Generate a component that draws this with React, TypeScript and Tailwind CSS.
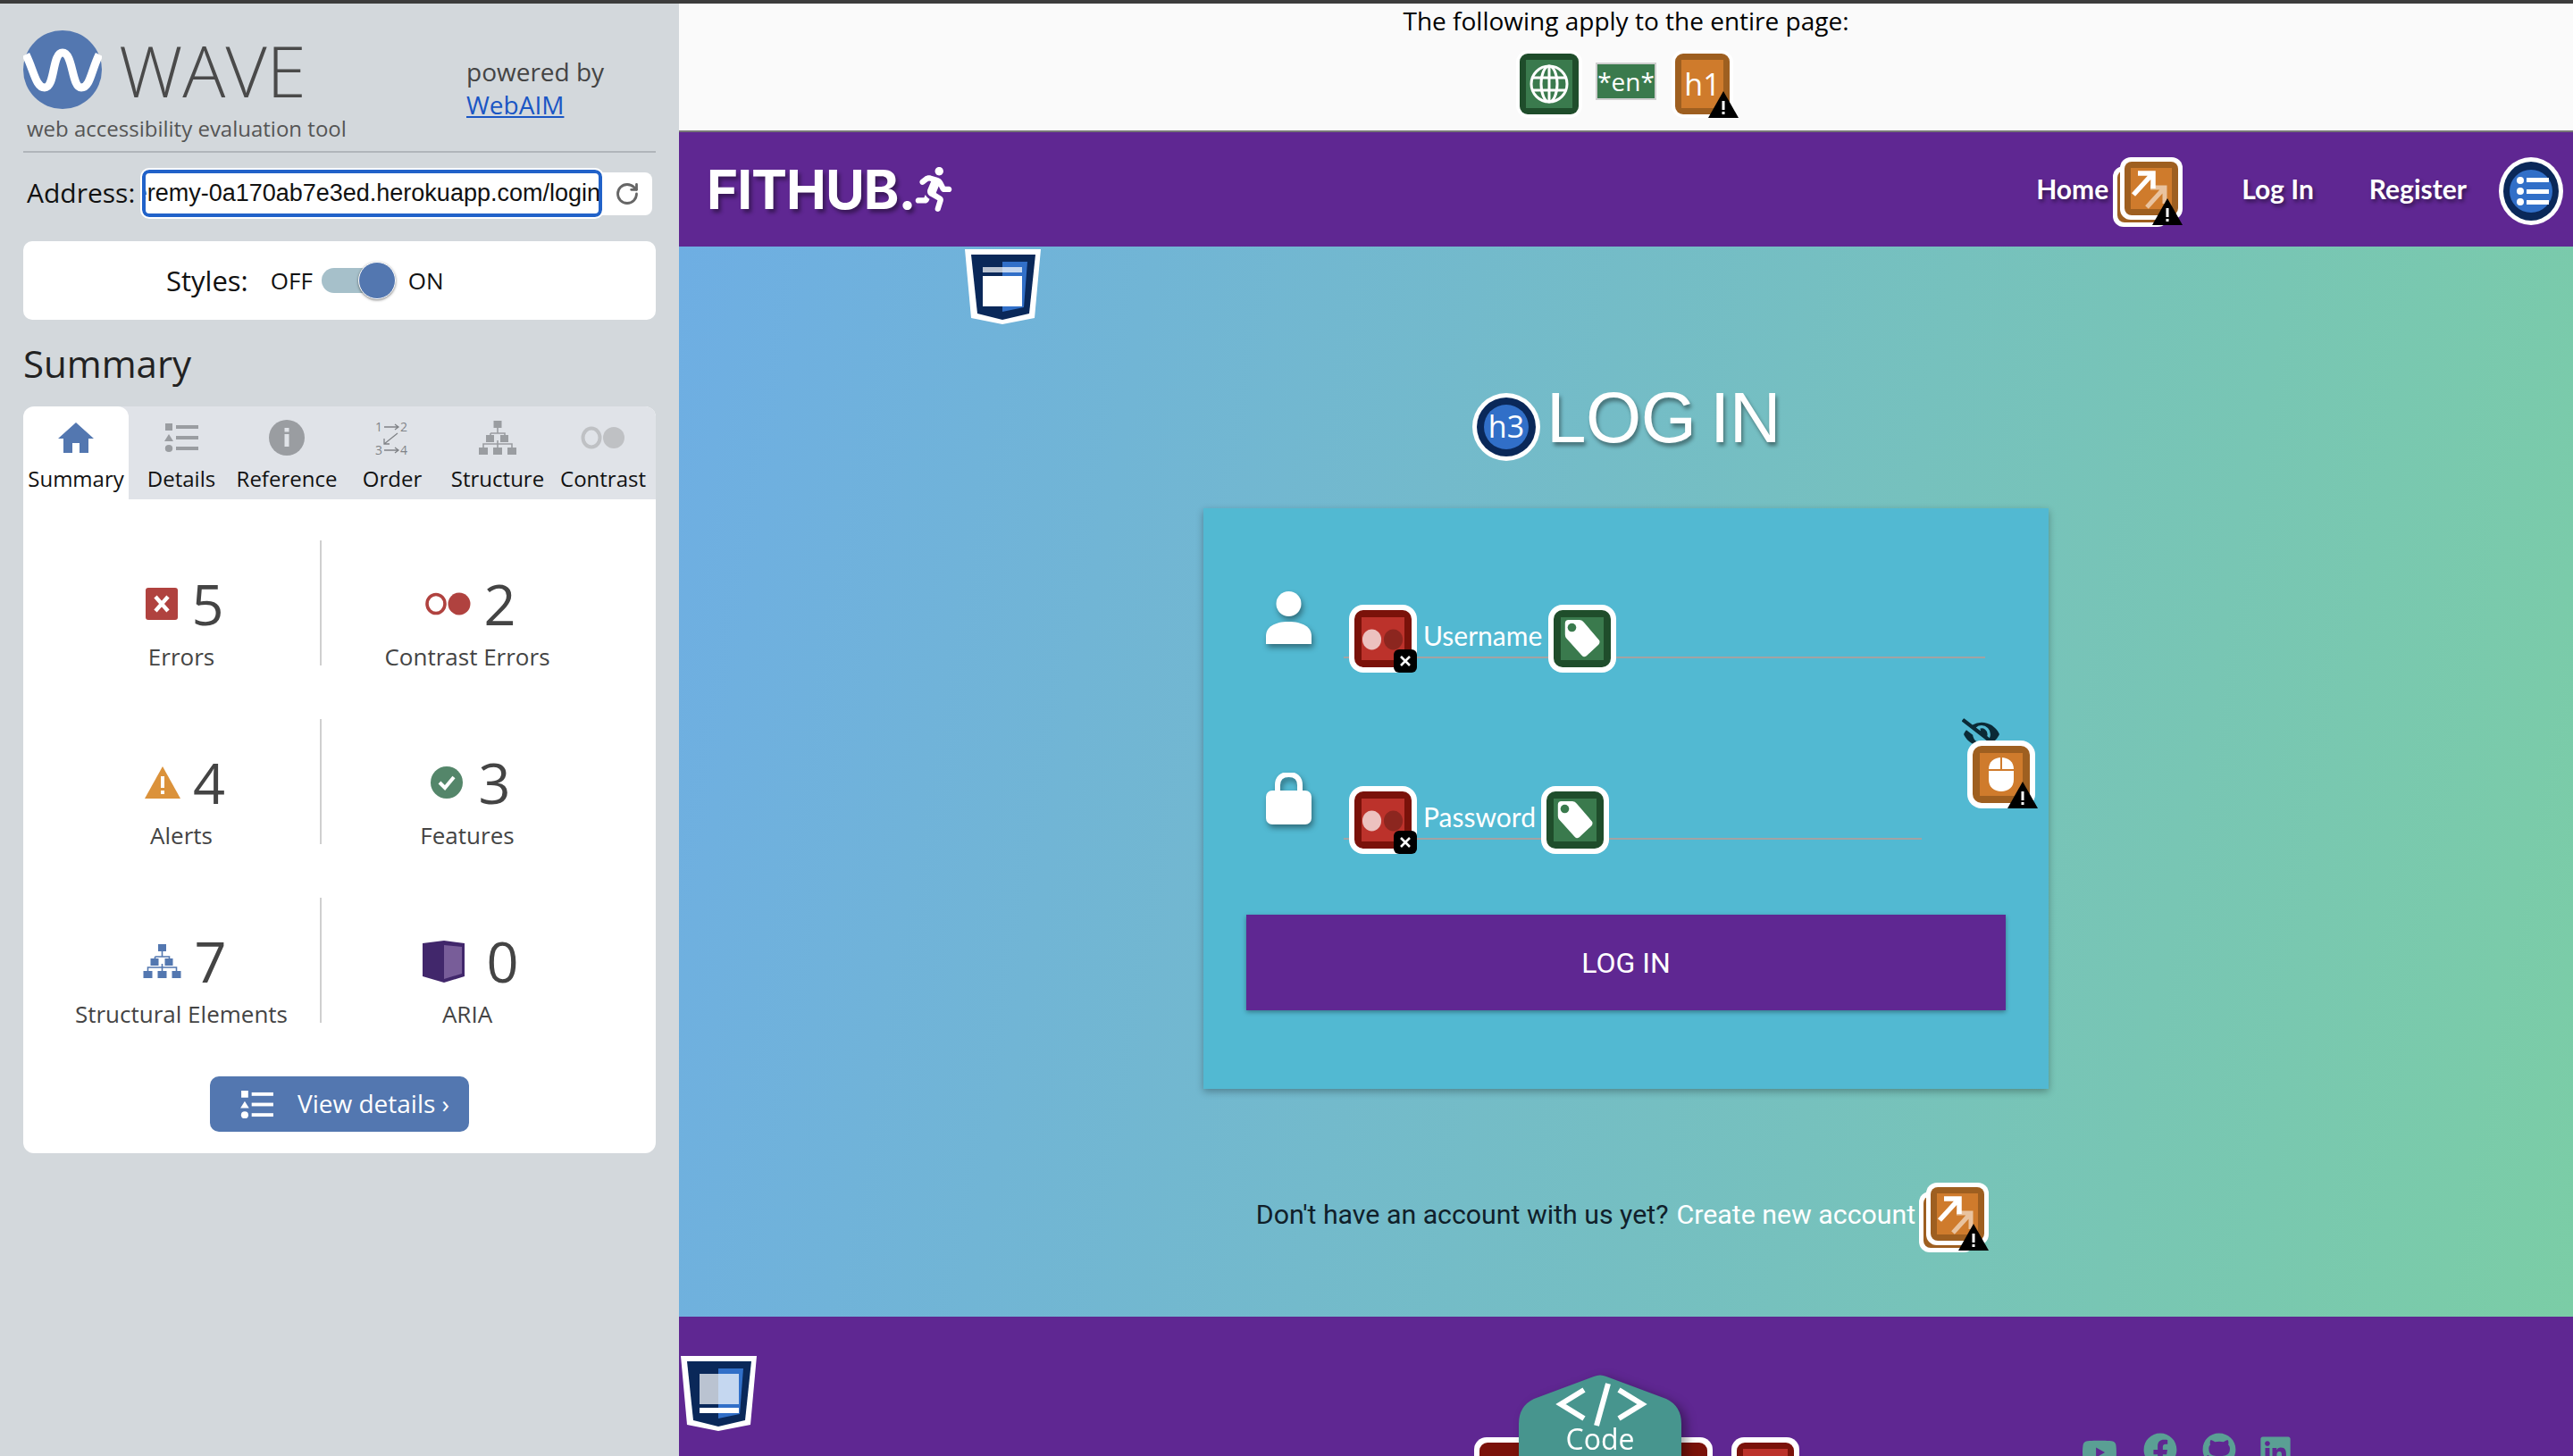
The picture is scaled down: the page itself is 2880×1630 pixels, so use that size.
import type { ReactNode } from "react"
import { RotateCw } from "lucide-react"
import { FaEyeSlash, FaFacebook, FaGithub, FaLinkedin, FaRunning, FaYoutube } from "react-icons/fa"

type Tone = "red" | "green" | "orange"

const tones = {
  red: { dark: "bg-[#7a120a]", light: "bg-[#bc322b]" },
  green: { dark: "bg-[#1f4d2b]", light: "bg-[#3a7a4d]" },
  orange: { dark: "bg-[#9e5f20]", light: "bg-[#cf7b2c]" },
}

const WarnBadge = ({ className }: { className: string }) => (
  <svg viewBox="0 0 34 30" className={`absolute w-[34px] h-[30px] ${className}`}>
    <polygon points="17,0 34,30 0,30" fill="#000" />
    <rect x="15.5" y="11" width="3" height="10" fill="#fff" />
    <rect x="15.5" y="23" width="3" height="3" fill="#fff" />
  </svg>
)

const XBadge = () => (
  <div className="absolute right-0 bottom-0 w-[26px] h-[26px] rounded-[6px] bg-black flex items-center justify-center">
    <svg viewBox="0 0 14 14" className="w-[14px] h-[14px]">
      <path d="M2 2 L12 12 M12 2 L2 12" stroke="#fff" strokeWidth="2.6" />
    </svg>
  </div>
)

const Tile = ({ tone, children, badge }: { tone: Tone; children: ReactNode; badge?: "warn" | "x" }) => (
  <div className="relative shrink-0 w-[76px] h-[76px] rounded-[16px] bg-white p-[6px]">
    <div className={`w-full h-full rounded-[10px] p-[8px] ${tones[tone].dark}`}>
      <div className={`w-full h-full flex items-center justify-center overflow-hidden ${tones[tone].light}`}>{children}</div>
    </div>
    {badge === "warn" && <WarnBadge className="right-[-3px] bottom-0" />}
    {badge === "x" && <XBadge />}
  </div>
)

const ContrastGlyph = () => (
  <svg viewBox="0 0 50 46" className="w-[48px] h-[46px]">
    <ellipse cx="12" cy="24" rx="11" ry="12" fill="#ecc1bf" />
    <ellipse cx="37" cy="24" rx="11" ry="12" fill="#8c261f" />
  </svg>
)

const TagGlyph = () => (
  <svg viewBox="0 0 50 50" className="w-[48px] h-[48px]">
    <path d="M5 7 Q5 3 9 3 H22 Q25 3 27 6 L45 27 Q46 30 44 32 L30 45 Q27 47 25 45 L6 24 Q5 22 5 20 Z" fill="#fff" />
    <circle cx="13" cy="12" r="5" fill="#3a7a4d" />
  </svg>
)

const LinkTile = () => (
  <div className="relative shrink-0 w-[78px] h-[78px]">
    <div className="absolute left-0 bottom-0 w-[62px] h-[68px] rounded-[12px] bg-white p-[5px]">
      <div className="w-full h-full rounded-[8px] bg-[#9e5f20]" />
    </div>
    <div className="absolute right-0 top-0 w-[70px] h-[70px] rounded-[12px] bg-white p-[5px]">
      <div className="w-full h-full rounded-[8px] bg-[#9e5f20] p-[7px]">
        <div className="w-full h-full bg-[#cf7b2c] overflow-hidden">
          <svg viewBox="0 0 46 46" className="w-full h-full">
            <path d="M22 22 H38 V40 M38 22 L18 44" stroke="#fff" strokeOpacity="0.55" strokeWidth="5" fill="none" />
            <path d="M8 6 H25 V23 M25 6 L3 30" stroke="#fff" strokeWidth="5.5" fill="none" />
          </svg>
        </div>
      </div>
    </div>
    <WarnBadge className="right-0 bottom-[2px]" />
  </div>
)

const Shield = ({ footer }: { footer?: boolean }) => (
  <svg viewBox="0 0 86 84" className="w-[86px] h-[84px]">
    <polygon points="1,0 86,0 79,77 43,84 8,77" fill="#fff" />
    <polygon points="8,6 80,6 73,72 43,79 15,72" fill="#0a2859" />
    <polygon points="43,14 71,14 67,65 43,70" fill="#316fc8" />
    {footer ? (
      <>
        <rect x="22" y="20" width="44" height="34" fill="#fff" opacity="0.72" />
        <rect x="22" y="58" width="44" height="6" fill="#fff" />
      </>
    ) : (
      <>
        <rect x="21" y="20" width="44" height="6" fill="#fff" opacity="0.72" />
        <rect x="21" y="30" width="44" height="34" fill="#fff" />
      </>
    )}
  </svg>
)

const Tree = ({ color, className }: { color: string; className: string }) => (
  <svg viewBox="0 0 42 38" className={className}>
    <path d="M21 4 V14 M13 14 H29 V22 M13 14 V22 M21 22 V32 M5 32 V26 H37 V32" stroke={color} strokeWidth="1.6" fill="none" />
    <rect x="16.5" y="0" width="9" height="8" fill={color} />
    <rect x="8" y="16" width="9" height="8" fill={color} />
    <rect x="24" y="16" width="9" height="8" fill={color} />
    <rect x="0" y="30" width="10" height="8" fill={color} />
    <rect x="16" y="30" width="10" height="8" fill={color} />
    <rect x="32" y="30" width="10" height="8" fill={color} />
  </svg>
)

const ListIcon = ({ color, className }: { color: string; className: string }) => (
  <svg viewBox="0 0 38 32" className={className}>
    <rect x="1" y="0" width="8" height="8" fill={color} />
    <polygon points="5,12 10,20 0,20" fill={color} />
    <ellipse cx="5" cy="28" rx="4.2" ry="4" fill={color} />
    <rect x="13" y="2" width="25" height="4" fill={color} />
    <rect x="13" y="14" width="25" height="4" fill={color} />
    <rect x="13" y="26" width="25" height="4" fill={color} />
  </svg>
)

const tabs: { label: string; icon: ReactNode }[] = [
  {
    label: "Summary",
    icon: (
      <svg viewBox="0 0 40 34" className="w-[40px] h-[34px]">
        <path d="M20 0 L40 18 H34 V34 H24 V23 H16 V34 H6 V18 H0 Z" fill="#5377b0" />
      </svg>
    ),
  },
  { label: "Details", icon: <ListIcon color="#9a9da1" className="w-[38px] h-[32px]" /> },
  {
    label: "Reference",
    icon: (
      <svg viewBox="0 0 40 40" className="w-[40px] h-[40px]">
        <circle cx="20" cy="20" r="20" fill="#9a9da1" />
        <rect x="17.5" y="16" width="5" height="14" fill="#e0e3e8" />
        <rect x="17.5" y="9" width="5" height="4.5" fill="#e0e3e8" />
      </svg>
    ),
  },
  {
    label: "Order",
    icon: (
      <svg viewBox="0 0 38 40" className="w-[38px] h-[40px]">
        <text x="0" y="13" fontSize="14" fontFamily="Open Sans" fill="#808387">1</text>
        <text x="28" y="13" fontSize="14" fontFamily="Open Sans" fill="#808387">2</text>
        <text x="0" y="39" fontSize="14" fontFamily="Open Sans" fill="#808387">3</text>
        <text x="28" y="39" fontSize="14" fontFamily="Open Sans" fill="#808387">4</text>
        <path d="M10 8 H26 M22 5 L26 8 L22 11 M10 34 H26 M22 31 L26 34 L22 37 M25 15 L10 27 M10 21 V27 H16" stroke="#808387" strokeWidth="1.3" fill="none" />
      </svg>
    ),
  },
  { label: "Structure", icon: <Tree color="#9a9da1" className="w-[42px] h-[38px]" /> },
  {
    label: "Contrast",
    icon: (
      <svg viewBox="0 0 50 40" className="w-[50px] h-[40px]">
        <ellipse cx="12" cy="20" rx="9.5" ry="10.5" fill="none" stroke="#bfc1c4" strokeWidth="4" />
        <ellipse cx="37" cy="20" rx="12" ry="12" fill="#bfc1c4" />
      </svg>
    ),
  },
]

const stats: { label: string; value: number; gap: string; icon: ReactNode }[] = [
  {
    label: "Errors",
    value: 5,
    gap: "gap-[15px]",
    icon: (
      <svg viewBox="0 0 36 36" className="w-[36px] h-[36px]">
        <rect width="36" height="36" rx="3" fill="#b0423f" />
        <path d="M11 10 L25 26 M25 10 L11 26" stroke="#fff" strokeWidth="4.4" />
      </svg>
    ),
  },
  {
    label: "Contrast Errors",
    value: 2,
    gap: "gap-[14px]",
    icon: (
      <svg viewBox="0 0 51 26" className="w-[51px] h-[26px]">
        <ellipse cx="12" cy="13" rx="10" ry="10.5" fill="none" stroke="#b0423f" strokeWidth="3.6" />
        <ellipse cx="38" cy="13" rx="12.5" ry="12.5" fill="#b0423f" />
      </svg>
    ),
  },
  {
    label: "Alerts",
    value: 4,
    gap: "gap-[14px]",
    icon: (
      <svg viewBox="0 0 40 36" className="w-[40px] h-[36px]">
        <polygon points="20,0 40,36 0,36" fill="#db923b" />
        <rect x="18" y="11" width="4" height="13" fill="#fff" />
        <rect x="18" y="27" width="4" height="4" fill="#fff" />
      </svg>
    ),
  },
  {
    label: "Features",
    value: 3,
    gap: "gap-[17px]",
    icon: (
      <svg viewBox="0 0 36 36" className="w-[36px] h-[36px]">
        <circle cx="18" cy="18" r="18" fill="#54866a" />
        <path d="M10 18 L16 24 L26 12" stroke="#fff" strokeWidth="4" fill="none" />
      </svg>
    ),
  },
  {
    label: "Structural Elements",
    value: 7,
    gap: "gap-[14px]",
    icon: <Tree color="#5377b0" className="w-[43px] h-[38px]" />,
  },
  {
    label: "ARIA",
    value: 0,
    gap: "gap-[24px]",
    icon: (
      <svg viewBox="0 0 47 47" className="w-[47px] h-[47px]">
        <polygon points="0,3 24,0 47,3 47,40 24,47 0,40" fill="#41276b" />
        <polygon points="24,5 44,7 44,37 24,43" fill="#785d99" />
      </svg>
    ),
  },
]

const navLink = "text-white font-bold text-[30px] [font-family:'Lato',sans-serif] [text-shadow:2px_3px_4px_rgba(0,0,0,0.45)]"
const fieldLabel = "ml-[7px] text-[30px] leading-[68px] text-white [font-family:'Lato',sans-serif]"

const App = () => {
  return (
    <div className="w-[2880px] h-[1630px] overflow-hidden flex flex-col bg-[#d3d8dc] [font-family:'Open_Sans',sans-serif]">
      <div className="h-[4px] bg-[#3c3c3c]" />
      <div className="flex flex-1 min-h-0">
        {/* WAVE sidebar */}
        <aside className="w-[760px] shrink-0 px-[26px]">
          <div className="h-[167px] flex border-b-2 border-[#b0b5ba]">
            <div className="w-[496px] pt-[30px]">
              <div className="flex items-center h-[88px]">
                <svg viewBox="0 0 88 88" className="w-[88px] h-[88px] shrink-0">
                  <circle cx="44" cy="44" r="44" fill="#5377b0" />
                  <path d="M3 27 C12 45 14 64 24 64 C36 64 32 25 44 25 C56 25 54 64 65 64 C75 64 76 45 85 27" stroke="#fff" strokeWidth="9" fill="none" />
                </svg>
                <span className="ml-[19px] text-[80px] leading-none font-light text-[#4a4a4a]">WAVE</span>
              </div>
              <div className="ml-[4px] mt-[5px] text-[24px] leading-[34px] text-[#555]">web accessibility evaluation tool</div>
            </div>
            <div className="pt-[58px] text-[28px] leading-[37px] text-[#444]">
              <div>powered by</div>
              <a className="text-[#1a56c4] underline">WebAIM</a>
            </div>
          </div>

          <div className="mt-[19px] flex items-center h-[53px] pl-[4px]">
            <span className="w-[129px] pb-[3px] text-[30px] text-[#111]">Address:</span>
            <div className="relative z-10 w-[515px] h-[53px] rounded-[8px] bg-white border-[4px] border-[#2162c9] outline-2 outline-white flex justify-end items-center overflow-hidden whitespace-nowrap text-[27px] text-[#111] [font-family:'Liberation_Sans',sans-serif]">
              <span className="mr-[-2px]">https://fithub-jeremy-0a170ab7e3ed.herokuapp.com/login</span>
            </div>
            <div className="w-[56px] h-[48px] bg-white rounded-r-[8px] flex items-center justify-center">
              <RotateCw className="w-[28px] h-[28px] text-[#666]" strokeWidth={2.4} />
            </div>
          </div>

          <div className="mt-[27px] h-[88px] rounded-[10px] bg-white flex items-center pl-[160px] text-[#111]">
            <span className="text-[31px]">Styles:</span>
            <span className="ml-[25px] text-[26px]">OFF</span>
            <div className="relative ml-[10px] w-[83px] h-[28px] rounded-full bg-[#a6c0ca]">
              <div className="absolute right-0 top-[-7px] w-[42px] h-[42px] rounded-full bg-[#5377b0] border border-white shadow-[0_1px_3px_rgba(0,0,0,0.5)]" />
            </div>
            <span className="ml-[14px] text-[26px]">ON</span>
          </div>

          <h2 className="h-[97px] flex items-center text-[42px] text-[#222]">Summary</h2>

          <div className="rounded-[12px] bg-white overflow-hidden">
            <div className="grid grid-cols-6 h-[104px] bg-[#e0e3e8]">
              {tabs.map((tab, i) => (
                <div key={tab.label} className={`flex flex-col items-center pt-[15px] ${i === 0 ? "bg-white rounded-t-[12px]" : ""}`}>
                  <div className="h-[40px] flex items-center justify-center">{tab.icon}</div>
                  <div className="mt-[2px] text-[24px] leading-[48px] text-[#111] whitespace-nowrap">{tab.label}</div>
                </div>
              ))}
            </div>

            <div className="grid grid-cols-[332px_376px] gap-y-[60px] pt-[46px]">
              {stats.map((stat, i) => (
                <div key={stat.label} className={`h-[140px] text-center ${i % 2 ? "border-l-2 border-[#cfcfcf] pr-[48px]" : "pl-[22px]"}`}>
                  <div className={`pt-[33px] pl-[8px] flex items-center justify-center ${stat.gap}`}>
                    {stat.icon}
                    <span className="text-[63px] leading-[76px] text-[#444]">{stat.value}</span>
                  </div>
                  <div className="text-[26px] leading-[42px] text-[#444] whitespace-nowrap">{stat.label}</div>
                </div>
              ))}
            </div>

            <div className="mt-[60px] pb-[24px] flex justify-center">
              <div className="w-[290px] h-[62px] rounded-[10px] bg-[#5377b0] flex items-center pl-[34px] text-white">
                <ListIcon color="#fff" className="w-[37px] h-[31px]" />
                <span className="ml-[27px] text-[28px] pb-[2px]">View details ›</span>
              </div>
            </div>
          </div>
        </aside>

        <main className="flex-1 min-w-0 flex flex-col">
          {/* page wide icons */}
          <div className="h-[144px] bg-[#fafafa] border-b-2 border-[#777] shrink-0">
            <div className="h-[38px] flex items-center justify-center text-[28px] text-black">The following apply to the entire page:</div>
            <div className="mt-[14px] flex justify-center items-start pr-[3px]">
              <div className="w-[74px] h-[76px] rounded-[14px] bg-white p-[4px]">
                <div className="w-full h-full rounded-[9px] bg-[#1f4d2b] p-[7px]">
                  <div className="w-full h-full bg-[#3a7a4d] flex items-center justify-center">
                    <svg viewBox="0 0 44 44" className="w-[44px] h-[44px]">
                      <g fill="none" stroke="#fff" strokeWidth="3">
                        <circle cx="22" cy="22" r="20" />
                        <ellipse cx="22" cy="22" rx="9" ry="20" />
                        <path d="M22 2 V42 M3 15 H41 M3 29 H41" />
                      </g>
                    </svg>
                  </div>
                </div>
              </div>
              <div className="ml-[15px] mt-[14px] w-[68px] h-[42px] bg-[#3a7a4d] border-2 border-[#cfcfcf] flex items-center justify-center text-[28px] text-white leading-none">*en*</div>
              <div className="relative ml-[17px] w-[69px] h-[76px] rounded-[14px] bg-white p-[4px]">
                <div className="w-full h-full rounded-[9px] bg-[#9e5f20] p-[7px]">
                  <div className="w-full h-full bg-[#cf7b2c] flex items-center justify-center text-[34px] text-white">h1</div>
                </div>
                <WarnBadge className="right-[-6px] bottom-0" />
              </div>
            </div>
          </div>

          <nav className="h-[128px] shrink-0 bg-[#5f2792] flex items-center justify-between pl-[13px] pr-[11px]">
            <div className="flex items-center ml-[18px]">
              <span className="text-[60px] leading-none font-bold text-white [font-family:'Inter',sans-serif] tracking-[-1px] [text-shadow:3px_4px_4px_rgba(0,0,0,0.4)]">FITHUB.</span>
              <FaRunning className="ml-[-2px] w-[44px] h-[50px] text-white" />
            </div>
            <div className="flex items-center">
              <span className={`pb-[2px] ${navLink}`}>Home</span>
              <div className="ml-[5px] mt-[6px]">
                <LinkTile />
              </div>
              <span className={`ml-[66px] pb-[2px] ${navLink}`}>Log In</span>
              <span className={`ml-[62px] pb-[2px] ${navLink}`}>Register</span>
              <svg viewBox="0 0 72 76" className="ml-[36px] mt-[4px] w-[72px] h-[76px]">
                <ellipse cx="36" cy="38" rx="36" ry="38" fill="#fff" />
                <ellipse cx="36" cy="38" rx="31" ry="33" fill="#0a2859" />
                <ellipse cx="36" cy="38" rx="24" ry="24" fill="#316fc8" />
                <g fill="#fff">
                  <circle cx="24" cy="26" r="4" />
                  <circle cx="24" cy="38" r="4" />
                  <circle cx="24" cy="50" r="4" />
                  <rect x="31" y="23" width="25" height="5" />
                  <rect x="31" y="36" width="25" height="5" />
                  <rect x="31" y="48" width="25" height="5" />
                </g>
              </svg>
            </div>
          </nav>

          <section className="relative h-[1198px] shrink-0 bg-[linear-gradient(100deg,#6eaee3,#7bcda6)] flex flex-col items-center pt-[164px]">
            <div className="absolute left-[319px] top-[3px]">
              <Shield />
            </div>

            <div className="flex items-start">
              <svg viewBox="0 0 78 76" className="w-[78px] h-[76px] shrink-0">
                <ellipse cx="39" cy="38" rx="38" ry="38" fill="#fff" />
                <ellipse cx="39" cy="38" rx="33" ry="33" fill="#0a2859" />
                <ellipse cx="39" cy="38" rx="25" ry="25" fill="#316fc8" />
                <text x="39" y="50" textAnchor="middle" fontSize="34" fontFamily="Open Sans" fill="#fff">h3</text>
              </svg>
              <span className="ml-[6px] mt-[-1px] text-[80px] leading-[58px] tracking-[-0.5px] [word-spacing:-6px] text-white [font-family:'Liberation_Sans',sans-serif] [text-shadow:2px_4px_4px_rgba(0,0,0,0.4)]">LOG IN</span>
            </div>

            <div className="relative mt-[53px] w-[946px] h-[650px] shrink-0 bg-[#52b9d2] shadow-[0_3px_8px_rgba(0,0,0,0.3)] pt-[108px] pl-[70px]">
              <div className="flex items-start h-[60px]">
                <svg viewBox="0 0 51 59" className="mt-[-15px] w-[51px] h-[59px] shrink-0 drop-shadow-[2px_4px_3px_rgba(0,0,0,0.4)]">
                  <ellipse cx="25.5" cy="14" rx="14" ry="14" fill="#fff" />
                  <path d="M0 59 V50 C0 40 10 34 25 34 C41 34 51 40 51 50 V59 Z" fill="#fff" />
                </svg>
                <div className="ml-[36px] w-[718px] h-[60px] border-b-2 border-[#a3a3a3] pl-[6px] flex items-start">
                  <Tile tone="red" badge="x">
                    <ContrastGlyph />
                  </Tile>
                  <span className={fieldLabel}>Username</span>
                  <div className="ml-[7px]">
                    <Tile tone="green">
                      <TagGlyph />
                    </Tile>
                  </div>
                </div>
              </div>

              <div className="mt-[143px] flex items-start h-[60px]">
                <svg viewBox="0 0 51 58" className="mt-[-15px] w-[51px] h-[58px] shrink-0 drop-shadow-[2px_4px_3px_rgba(0,0,0,0.4)]">
                  <path d="M13 24 V14 C13 6 18 2 25.5 2 C33 2 38 6 38 14 V24" stroke="#fff" strokeWidth="6" fill="none" />
                  <rect x="0" y="20" width="51" height="38" rx="7" fill="#fff" />
                </svg>
                <div className="ml-[36px] w-[647px] h-[60px] border-b-2 border-[#a3a3a3] pl-[6px] flex items-start">
                  <Tile tone="red" badge="x">
                    <ContrastGlyph />
                  </Tile>
                  <span className={fieldLabel}>Password</span>
                  <div className="ml-[6px]">
                    <Tile tone="green">
                      <TagGlyph />
                    </Tile>
                  </div>
                </div>
              </div>

              {/* hidden password toggle */}
              <div className="absolute left-[849px] top-[235px]">
                <FaEyeSlash className="w-[44px] h-[36px] text-[#0b2a36]" />
              </div>
              <div className="absolute left-[855px] top-[260px]">
                <Tile tone="orange" badge="warn">
                  <svg viewBox="0 0 28 38" className="w-[28px] h-[38px]">
                    <path d="M14 0 C22 0 28 5 28 13 V25 C28 33 22 38 14 38 C6 38 0 33 0 25 V13 C0 5 6 0 14 0 Z" fill="#fff" />
                    <path d="M0 14 H28 M14 0 V14" stroke="#cf7b2c" strokeWidth="2" />
                  </svg>
                </Tile>
              </div>

              <div className="-ml-[22px] mt-[84px] w-[850px] h-[107px] bg-[#5f2792] shadow-[0_2px_5px_rgba(0,0,0,0.35)] flex items-center justify-center text-[32px] text-white [font-family:'Roboto',sans-serif]">
                LOG IN
              </div>
            </div>

            <div className="mt-[105px] flex items-center text-[30.3px] pr-[8px] [font-family:'Roboto',sans-serif]">
              <span className="pb-[7px] text-[#10202a]">Don't have an account with us yet?</span>
              <span className="ml-[9px] pb-[7px] text-white">Create new account</span>
              <div className="ml-[4px]">
                <LinkTile />
              </div>
            </div>
          </section>

          <footer className="relative flex-1 bg-[#5f2792] overflow-hidden">
            <div className="absolute left-[1px] top-[44px]">
              <Shield footer />
            </div>
            <div className="absolute left-[890px] top-[135px] flex">
              <div className="w-[76px] h-[76px] rounded-[14px] bg-white p-[6px]">
                <div className="w-full h-full rounded-[9px] bg-[#7a120a]" />
              </div>
              <div className="ml-[115px] w-[76px] h-[76px] rounded-[14px] bg-white p-[6px]">
                <div className="w-full h-full rounded-[9px] bg-[#7a120a]" />
              </div>
              <div className="ml-[21px] w-[76px] h-[76px] rounded-[14px] bg-white p-[6px]">
                <div className="w-full h-full rounded-[9px] bg-[#7a120a] p-[7px]">
                  <div className="w-full h-full bg-[#bc322b]" />
                </div>
              </div>
            </div>
            <div className="absolute left-[940px] top-[65px] w-[182px] h-[100px] drop-shadow-[6px_4px_6px_rgba(0,0,0,0.35)]">
              <svg viewBox="0 0 182 100" className="absolute inset-0 w-[182px] h-[100px]">
                <path d="M84 2 Q91 -1 98 2 L165 27 Q182 35 182 55 V100 H0 V55 Q0 35 17 27 Z" fill="#47958e" />
                <path d="M73 17 L47 33 L73 49 M100 10 L87 57 M112 17 L138 33 L112 49" stroke="#fff" strokeWidth="6" fill="none" />
              </svg>
              <div className="absolute inset-x-0 top-[50px] text-center text-[32px] leading-[44px] text-white">Code</div>
            </div>
            <div className="absolute left-[1570px] top-[130px] flex items-start text-[#5a9f94]">
              <FaYoutube className="mt-[2px] w-[40px] h-[40px]" />
              <FaFacebook className="ml-[29px] w-[38px] h-[38px]" />
              <FaGithub className="ml-[28px] w-[38px] h-[38px]" />
              <FaLinkedin className="ml-[27px] mt-[2px] w-[34px] h-[38px]" />
            </div>
          </footer>
        </main>
      </div>
    </div>
  )
}

export default App
